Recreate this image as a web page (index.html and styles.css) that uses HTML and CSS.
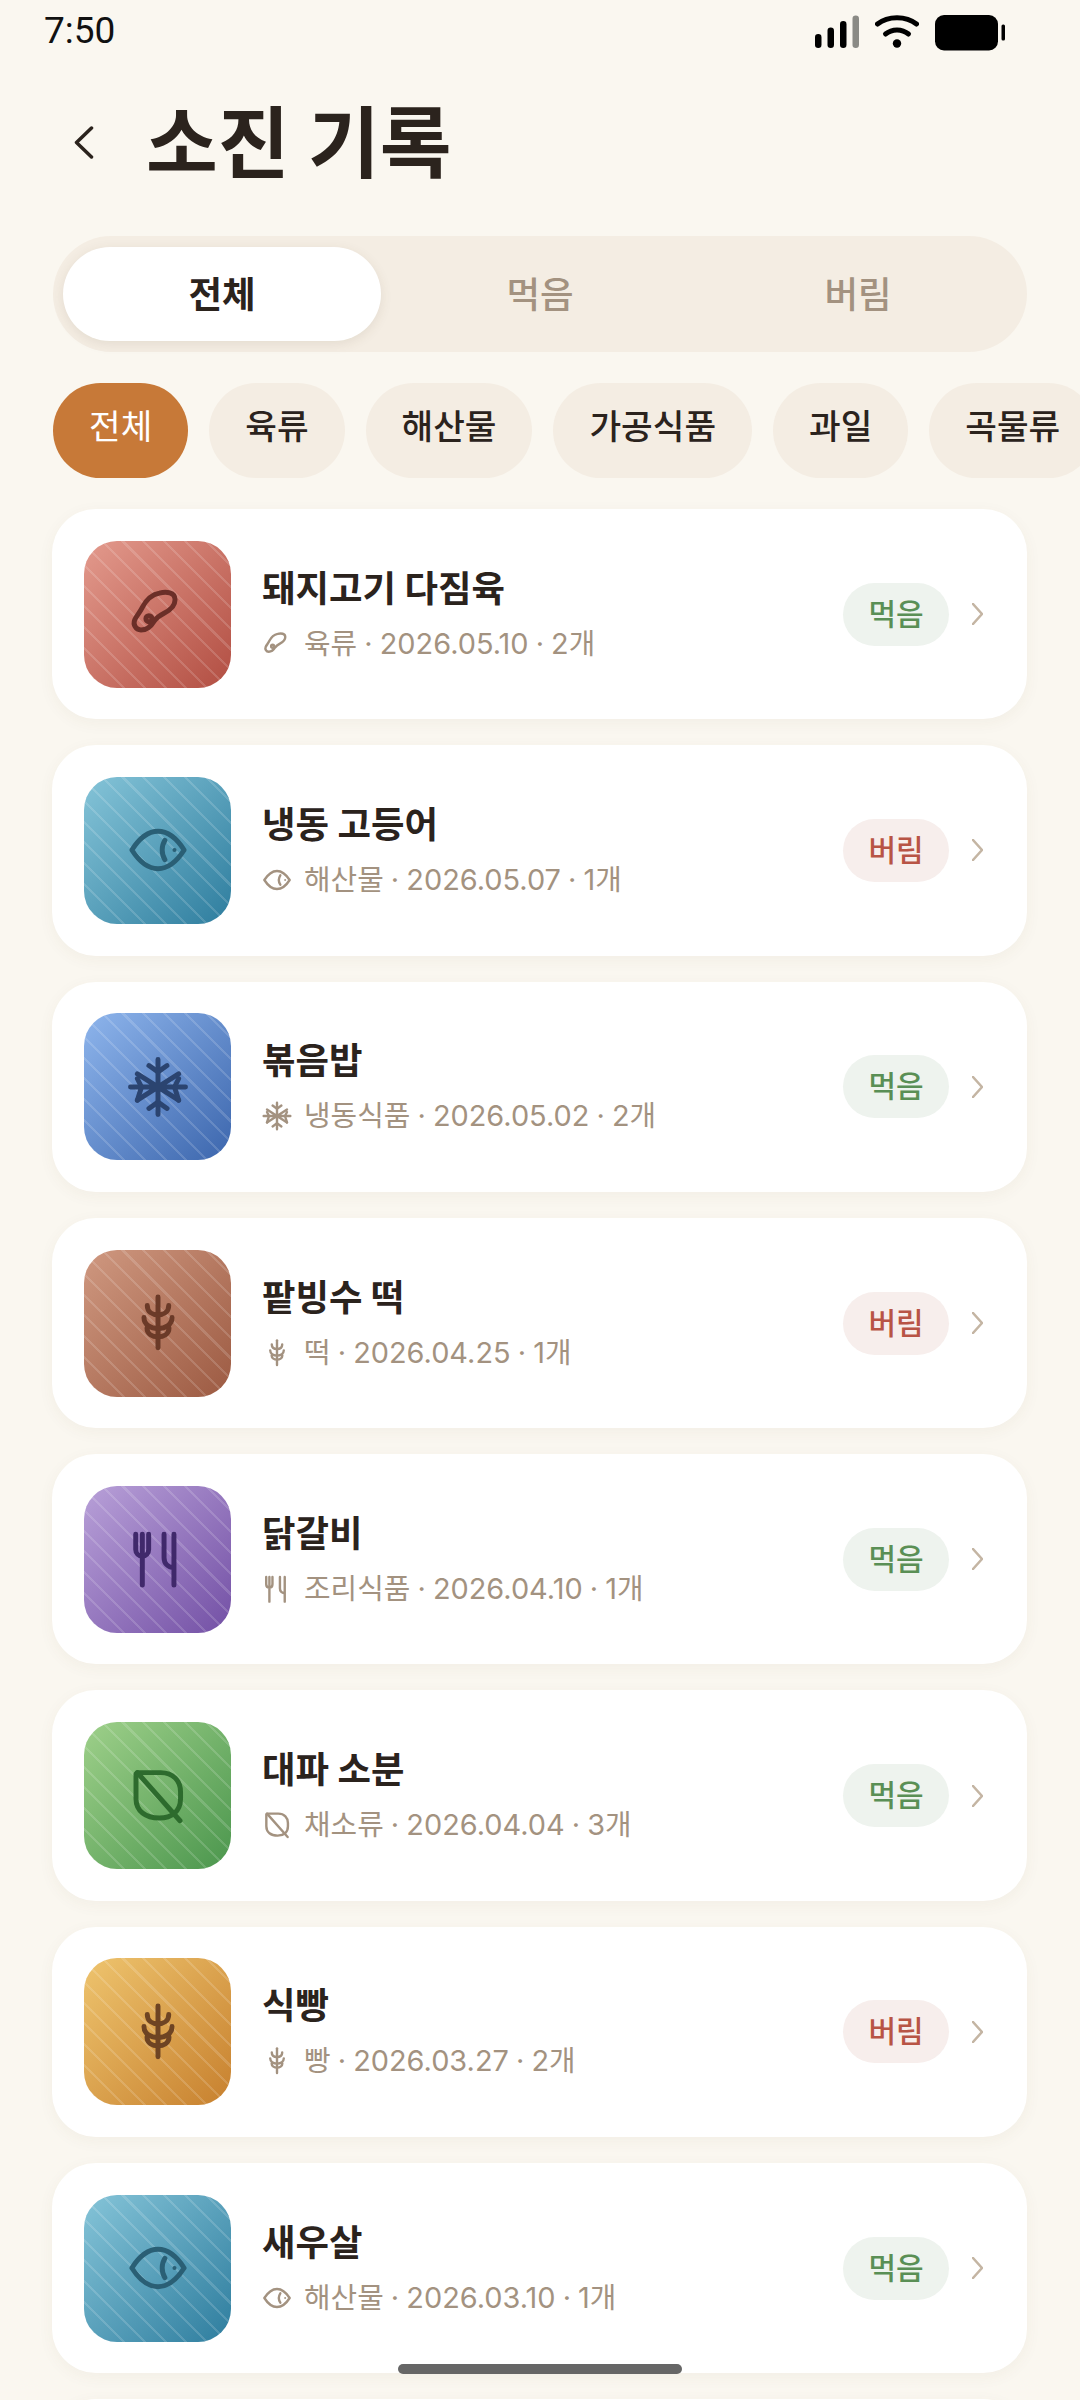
FILE: index.html
```html
<!DOCTYPE html>
<html lang="ko">
<head>
	<meta charset="UTF-8">
	<meta name="viewport" content="width=device-width, initial-scale=1">

	<title>소진 기록</title>

	<link rel="stylesheet" href="styles.css">
</head>
<body>
	<!-- icon set, used by every card below -->
	<svg class="sprite" xmlns="http://www.w3.org/2000/svg">
		<symbol id="i-meat" viewBox="0 0 24 24">
			<path d="M12.5 4.4C15 3.8 18.2 4 18.2 6.8C18.2 9.4 16 10.8 14.2 11.7C12.4 12.6 11.4 13.4 10.6 14.6C9.4 16.6 7.6 17.8 5.8 17.8C3.8 17.8 2.9 15.7 3.5 14.2C4.2 12.6 5.2 11.8 6.3 9.6C7.6 7 9.4 5 12.5 4.4Z"/>
			<circle cx="8.7" cy="13.7" r="1.1"/>
		</symbol>
		<symbol id="i-fish" viewBox="0 0 24 24">
			<path d="M2.5 12C6 6.5 9 5.2 12 5.2C15 5.2 18 6.5 21.5 12C18 17.5 15 18.8 12 18.8C9 18.8 6 17.5 2.5 12Z"/>
			<path d="M14.5 8.5C13.2 10.5 13.2 13.5 14.5 15.5"/>
			<circle cx="18" cy="12" r=".4" stroke-width=".7"/>
		</symbol>
		<symbol id="i-snow" viewBox="0 0 24 24">
			<path d="M12 2V22M2 12H22M4.5 7.2L19.5 16.8M19.5 7.2L4.5 16.8"/>
			<path d="M8.7 4.2L12 6.5L15.3 4.2M8.7 19.8L12 17.5L15.3 19.8"/>
			<path d="M4.5 9L6 12L4.5 16.8M19.5 9L18 12L19.5 16.8"/>
		</symbol>
		<symbol id="i-wheat" viewBox="0 0 24 24">
			<path d="M12 2.5V21"/>
			<path d="M8.1 5.6C8.1 8 10 9 12 9C14 9 15.9 8 15.9 5.6"/>
			<path d="M6.9 10C6.9 12.8 9.5 14 12 14C14.5 14 17.1 12.8 17.1 10"/>
			<path d="M8 13.8C8 16 10 17 12 17C14 17 16 16 16 13.8"/>
		</symbol>
		<symbol id="i-fork" viewBox="0 0 24 24">
			<path d="M3.9 3V8.5C3.9 10 5 11 6.3 11C7.6 11 8.6 10 8.6 8.5V3M6.3 3V21.5"/>
			<path d="M14.2 3V11.5C14.2 13.5 15.5 15 17.8 15.2M17.8 3V21.5"/>
		</symbol>
		<symbol id="i-leaf" viewBox="0 0 24 24">
			<path d="M4.5 3.5H13C17.5 3.5 20.2 6.5 20.2 10.5V13C20.2 17.5 17 20 12.5 20C7.5 20 4 17.5 4 13V4Z"/>
			<path d="M4.5 3.5L20 21"/>
		</symbol>
		<symbol id="i-next" viewBox="0 0 11 22">
			<path d="M1 1L10 11L1 21"/>
		</symbol>
	</svg>

	<div class="status-bar">
		<span class="clock">7:50</span>
		<div class="status-icons">
			<svg width="44" height="33" viewBox="0 0 44 33">
				<rect x="0" y="19" width="6.5" height="14" rx="3.2"/>
				<rect x="12.5" y="12.5" width="6.5" height="20.5" rx="3.2"/>
				<rect x="25" y="6" width="6.5" height="27" rx="3.2"/>
				<rect class="bar-off" x="37.5" y="0.5" width="6.5" height="32.5" rx="3.2"/>
			</svg>
			<svg width="44" height="33" viewBox="0 0 44 33">
				<path class="wifi" d="M2.5 9C13 0.5 31 0.5 41.5 9"/>
				<path class="wifi" d="M10.5 19C17 13.5 27 13.5 33.5 19"/>
				<circle cx="22" cy="28.5" r="4.2"/>
			</svg>
			<svg width="70" height="36" viewBox="0 0 70 36">
				<rect x="0" y="0" width="63" height="35.5" rx="9"/>
				<rect x="66.5" y="9.5" width="3.5" height="16" rx="1.5"/>
			</svg>
		</div>
	</div>

	<header class="title-row">
		<svg class="back" width="20" height="33" viewBox="0 0 20 33">
			<path d="M17.5 2L2.5 16.5L17.5 31"/>
		</svg>
		<h1>소진 기록</h1>
	</header>

	<div class="segment">
		<div class="segment-item active">전체</div>
		<div class="segment-item">먹음</div>
		<div class="segment-item">버림</div>
	</div>

	<div class="chips">
		<div class="chip active">전체</div>
		<div class="chip">육류</div>
		<div class="chip">해산물</div>
		<div class="chip">가공식품</div>
		<div class="chip">과일</div>
		<div class="chip">곡물류</div>
	</div>

	<div class="list">
		<div class="card">
			<div class="thumb meat"><svg><use href="#i-meat"/></svg></div>
			<div class="info">
				<div class="name">돼지고기 다짐육</div>
				<div class="meta"><svg><use href="#i-meat"/></svg>육류 · 2026.05.10 · 2개</div>
			</div>
			<span class="badge eaten">먹음</span>
			<svg class="next"><use href="#i-next"/></svg>
		</div>

		<div class="card">
			<div class="thumb sea"><svg><use href="#i-fish"/></svg></div>
			<div class="info">
				<div class="name">냉동 고등어</div>
				<div class="meta"><svg><use href="#i-fish"/></svg>해산물 · 2026.05.07 · 1개</div>
			</div>
			<span class="badge tossed">버림</span>
			<svg class="next"><use href="#i-next"/></svg>
		</div>

		<div class="card">
			<div class="thumb frozen"><svg><use href="#i-snow"/></svg></div>
			<div class="info">
				<div class="name">볶음밥</div>
				<div class="meta"><svg><use href="#i-snow"/></svg>냉동식품 · 2026.05.02 · 2개</div>
			</div>
			<span class="badge eaten">먹음</span>
			<svg class="next"><use href="#i-next"/></svg>
		</div>

		<div class="card">
			<div class="thumb ricecake"><svg><use href="#i-wheat"/></svg></div>
			<div class="info">
				<div class="name">팥빙수 떡</div>
				<div class="meta"><svg><use href="#i-wheat"/></svg>떡 · 2026.04.25 · 1개</div>
			</div>
			<span class="badge tossed">버림</span>
			<svg class="next"><use href="#i-next"/></svg>
		</div>

		<div class="card">
			<div class="thumb cooked"><svg><use href="#i-fork"/></svg></div>
			<div class="info">
				<div class="name">닭갈비</div>
				<div class="meta"><svg><use href="#i-fork"/></svg>조리식품 · 2026.04.10 · 1개</div>
			</div>
			<span class="badge eaten">먹음</span>
			<svg class="next"><use href="#i-next"/></svg>
		</div>

		<div class="card">
			<div class="thumb veg"><svg><use href="#i-leaf"/></svg></div>
			<div class="info">
				<div class="name">대파 소분</div>
				<div class="meta"><svg><use href="#i-leaf"/></svg>채소류 · 2026.04.04 · 3개</div>
			</div>
			<span class="badge eaten">먹음</span>
			<svg class="next"><use href="#i-next"/></svg>
		</div>

		<div class="card">
			<div class="thumb bread"><svg><use href="#i-wheat"/></svg></div>
			<div class="info">
				<div class="name">식빵</div>
				<div class="meta"><svg><use href="#i-wheat"/></svg>빵 · 2026.03.27 · 2개</div>
			</div>
			<span class="badge tossed">버림</span>
			<svg class="next"><use href="#i-next"/></svg>
		</div>

		<div class="card">
			<div class="thumb sea"><svg><use href="#i-fish"/></svg></div>
			<div class="info">
				<div class="name">새우살</div>
				<div class="meta"><svg><use href="#i-fish"/></svg>해산물 · 2026.03.10 · 1개</div>
			</div>
			<span class="badge eaten">먹음</span>
			<svg class="next"><use href="#i-next"/></svg>
		</div>

		<div class="card"></div>
	</div>

	<div class="home-bar"></div>
</body>
</html>
```

FILE: styles.css
```css
* {
	margin: 0;
	padding: 0;
	box-sizing: border-box;
}

html, body {
	height: 2400px;
	overflow: hidden;
}

body {
	position: relative;
	background: #faf7f0;
	color: #2b231d;
	font-family: "Inter", "Noto Sans CJK KR", sans-serif;
}

.sprite {
	display: none;
}

/* status bar */
.status-bar {
	display: flex;
	justify-content: space-between;
	height: 66px;
	padding: 9px 75px 0 44px;
}

.clock {
	font-family: "Roboto", sans-serif;
	font-size: 37px;
	line-height: 44px;
	color: #111;
}

.status-icons {
	display: flex;
	gap: 16px;
	padding-top: 6px;
	align-items: flex-start;
}

.bar-off {
	fill: #8a8a85;
}

.wifi {
	fill: none;
	stroke: #000;
	stroke-width: 5;
	stroke-linecap: round;
}

/* title */
.title-row {
	display: flex;
	align-items: center;
	height: 156px;
	padding-left: 74px;
	gap: 52px;
}

.back {
	margin-bottom: 4px;
}

.back path {
	fill: none;
	stroke: #2b231d;
	stroke-width: 3.5;
	stroke-linecap: round;
	stroke-linejoin: round;
}

.title-row h1 {
	font-size: 78px;
	font-weight: 700;
	line-height: 110px;
}

/* segment */
.segment {
	display: flex;
	height: 116px;
	margin: 14px 53px 0;
	padding: 11px 10px;
	border-radius: 58px;
	background: #f4ede3;
}

.segment-item {
	flex: 1;
	display: flex;
	align-items: center;
	justify-content: center;
	border-radius: 47px;
	padding-bottom: 4px;
	font-size: 36.5px;
	font-weight: 500;
	color: #a39280;
}

.segment-item.active {
	background: #fff;
	color: #2b231d;
	font-weight: 700;
	box-shadow: 0 3px 12px rgba(90, 70, 40, .1);
}

/* category chips */
.chips {
	display: flex;
	gap: 21px;
	margin-top: 31px;
	padding-left: 53px;
}

.chip {
	flex: none;
	height: 95px;
	padding: 0 36px;
	border-radius: 48px;
	background: #f4ede3;
	font-size: 34.4px;
	font-weight: 500;
	line-height: 88px;
}

.chip.active {
	background: #c77938;
	color: #fff;
	font-weight: 400;
}

/* record list */
.list {
	display: flex;
	flex-direction: column;
	gap: 26px;
	margin: 31px 53px 0 52px;
}

.card {
	flex: none;
	display: flex;
	align-items: center;
	height: 210.3px;
	padding: 0 44px 0 32px;
	border-radius: 44px;
	background: #fff;
	box-shadow: 0 4px 16px rgba(90, 70, 40, .05);
}

.thumb {
	flex: none;
	display: flex;
	align-items: center;
	justify-content: center;
	width: 147px;
	height: 147px;
	border-radius: 33px;
	background-image:
		repeating-linear-gradient(45deg, transparent 0 12.5px, rgba(255, 255, 255, .15) 12.5px 14.7px),
		linear-gradient(135deg, var(--from), var(--to));
}

.thumb svg {
	width: 66px;
	height: 66px;
	fill: none;
	stroke: var(--ink);
	stroke-width: 1.8;
	stroke-linecap: round;
	stroke-linejoin: round;
}

.meat {
	--ink: #6b2f28;
	--from: #e39a8d;
	--to: #b24e42;
}

.sea {
	--ink: #2a5f75;
	--from: #85c4d8;
	--to: #2e7d9e;
}

.frozen {
	--ink: #2b4470;
	--from: #8eb5ec;
	--to: #3c66ad;
}

.ricecake {
	--ink: #6b3a28;
	--from: #cf9880;
	--to: #9c5a42;
}

.cooked {
	--ink: #40296b;
	--from: #b8a0d8;
	--to: #7350a5;
}

.veg {
	--ink: #2d6b2d;
	--from: #9ed08a;
	--to: #4b964d;
}

.bread {
	--ink: #6e4423;
	--from: #eec46e;
	--to: #c7802e;
}

.info {
	flex: 1;
	padding-left: 31px;
}

.name {
	font-size: 36.4px;
	font-weight: 700;
	line-height: 48px;
	margin-top: 2px;
}

.meta {
	display: flex;
	align-items: center;
	margin-top: 9px;
	font-size: 28.9px;
	line-height: 44px;
	word-spacing: -1px;
	color: #a39280;
}

.meta svg {
	flex: none;
	width: 32px;
	height: 32px;
	margin: 0 11px 0 -1px;
	fill: none;
	stroke: #a39280;
	stroke-width: 1.8;
	stroke-linecap: round;
	stroke-linejoin: round;
}

.badge {
	flex: none;
	width: 106px;
	height: 63px;
	border-radius: 32px;
	font-size: 30px;
	font-weight: 500;
	line-height: 62px;
	text-align: center;
}

.badge.eaten {
	background: #eef3ee;
	color: #5a8f55;
}

.badge.tossed {
	background: #f7eeec;
	color: #b85445;
}

.next {
	flex: none;
	width: 11px;
	height: 22px;
	margin-left: 23px;
	fill: none;
	stroke: #c4b5a3;
	stroke-width: 2.6;
	stroke-linecap: round;
	stroke-linejoin: round;
}

.home-bar {
	position: absolute;
	left: 398px;
	top: 2364px;
	width: 284px;
	height: 10px;
	border-radius: 5px;
	background: #666;
}
```
